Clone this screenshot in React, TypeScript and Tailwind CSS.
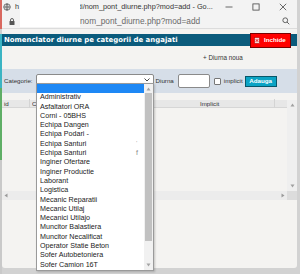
import React from "react";

const items: { t: string; r?: string }[] = [
  { t: "" },
  { t: "Administrativ" },
  { t: "Asfaltatori ORA" },
  { t: "Corni - 05BHS" },
  { t: "Echipa Dangen" },
  { t: "Echipa Podari -" },
  { t: "Echipa Santuri", r: "\u02c8" },
  { t: "Echipa Santuri", r: "f" },
  { t: "Inginer Ofertare" },
  { t: "Inginer Productie" },
  { t: "Laborant" },
  { t: "Logistica" },
  { t: "Mecanic Reparatii" },
  { t: "Mecanic Utilaj" },
  { t: "Mecanici Utilajo" },
  { t: "Muncitor Balastiera" },
  { t: "Muncitor Necalificat" },
  { t: "Operator Statie Beton" },
  { t: "Sofer Autobetoniera" },
  { t: "Sofer Camion 16T" },
];

function Globe() {
  return (
    <svg width="8" height="8" viewBox="0 0 16 16" fill="none" stroke="#555" strokeWidth="1.6">
      <circle cx="8" cy="8" r="6.5" />
      <path d="M1.5 8h13M8 1.5c-2.5 3-2.5 10 0 13M8 1.5c2.5 3 2.5 10 0 13" />
    </svg>
  );
}

function Lock() {
  return (
    <svg width="6" height="7" viewBox="0 0 12 14" fill="#555">
      <rect x="1" y="6" width="10" height="8" rx="1" />
      <path d="M3 6V4a3 3 0 0 1 6 0v2" fill="none" stroke="#555" strokeWidth="1.8" />
    </svg>
  );
}

function Search() {
  return (
    <svg width="8" height="8" viewBox="0 0 16 16" fill="none" stroke="#555" strokeWidth="1.8">
      <circle cx="6.5" cy="6.5" r="4.8" />
      <path d="M10 10l4.5 4.5" />
    </svg>
  );
}

export default function App() {
  return (
    <div className="relative w-[300px] h-[274px] overflow-hidden bg-[#d2d2d2] flex font-['Liberation_Sans',Arial,sans-serif]">
      {/* background strip at the very left */}
      <div className="w-[2px] flex flex-col">
        <div className="h-[29px] bg-[#d9685f]" />
        <div className="h-[5px] bg-[#cfcfcf]" />
        <div className="h-[54px] bg-[#3bb4c3]" />
        <div className="h-[72px] bg-[#5fae66]" />
        <div className="flex-1 bg-[#c9c9c9]" />
      </div>

      {/* browser popup window */}
      <div className="relative w-[295px] h-[268px] bg-[#f4f3f1] rounded-b-[3px] flex flex-col">
        {/* title bar */}
        <div className="h-[14px] bg-[#f3f3f3] flex items-center text-[7.3px] text-[#333] whitespace-nowrap">
          <div className="ml-[1px] w-[8px] flex justify-center">
            <Globe />
          </div>
          <span className="ml-[4px]">h</span>
          <span className="ml-[60px]">ti/nom_pont_diurne.php?mod=add - Go...</span>
          <div className="ml-auto flex items-center gap-[19px] pr-[10px]">
            <svg width="8" height="8" viewBox="0 0 8 8">
              <path d="M0.5 4h7" stroke="#444" strokeWidth="0.8" />
            </svg>
            <svg width="8" height="8" viewBox="0 0 8 8">
              <rect x="0.9" y="0.9" width="6.2" height="6.2" fill="none" stroke="#444" strokeWidth="0.8" />
            </svg>
            <svg width="8" height="8" viewBox="0 0 8 8">
              <path d="M0.8 0.8l6.4 6.4M7.2 0.8L0.8 7.2" stroke="#444" strokeWidth="0.8" />
            </svg>
          </div>
        </div>

        {/* address bar */}
        <div className="h-[15px] bg-[#f3f3f3] border-b border-[#dcdcdc] flex items-center text-[8.3px] text-[#6a6a6a] whitespace-nowrap">
          <div className="ml-[7px] w-[6px] flex justify-center">
            <Lock />
          </div>
          <span className="ml-[65px]">nom_pont_diurne.php?mod=add</span>
          <div className="ml-auto pr-[7px] flex">
            <Search />
          </div>
        </div>

        {/* redaction box */}
        <div className="absolute left-[18px] top-0 w-[60px] h-[27px] bg-white" />

        {/* page */}
        <div className="flex-1 flex flex-col">
          <div className="h-[5px]" />
          <div className="h-[12px] bg-[#0b5b7c] flex items-center justify-between pl-[2px] pr-[6px]">
            <span className="font-['DejaVu_Sans',sans-serif] font-bold text-[6.95px] text-white whitespace-nowrap">
              Nomenclator diurne pe categorii de angajati
            </span>
            <div className="h-[15px] w-[41px] bg-[#ff0000] border border-[#7a0000] flex items-center pl-[3px] gap-[4px]">
              <svg width="6" height="7" viewBox="0 0 6 7">
                <rect x="0.5" y="0.5" width="5" height="6" fill="#f6d6d6" stroke="#b00" strokeWidth="0.6" />
                <path d="M1.8 2.2l2.4 2.6M4.2 2.2L1.8 4.8" stroke="#d00" strokeWidth="0.8" />
              </svg>
              <span className="text-white font-bold text-[6.2px]">Inchide</span>
            </div>
          </div>

          <div className="h-[23px] flex items-center pl-[201px] text-[6.3px] text-[#333] whitespace-nowrap">
            + Diurna noua
          </div>

          {/* form bar */}
          <div className="h-[24px] bg-[#d6dee8] flex items-center pl-[2px] text-[6.2px] text-[#333] whitespace-nowrap">
            <span>Categorie:</span>
            <div className="ml-[3px] w-[118px] h-[12px] -mt-[2px] bg-white border border-[#8a8a8a] rounded-[2px] flex items-center justify-end pr-[3px]">
              <svg width="6" height="4" viewBox="0 0 6 4">
                <path d="M0.5 0.5L3 3l2.5-2.5" fill="none" stroke="#333" strokeWidth="0.9" />
              </svg>
            </div>
            <span className="ml-[2px]">Diurna</span>
            <div className="ml-[4px] w-[32px] h-[14px] bg-white border border-[#8a8a8a] rounded-[2px]" />
            <div className="ml-[4px] w-[7px] h-[7px] bg-white border border-[#777] rounded-[1px]" />
            <span className="ml-[3px]">implicit</span>
            <div className="ml-[2px] w-[32px] h-[11px] bg-[#0ba3c4] border border-[#07576a] flex items-center justify-center text-white font-bold">
              Adauga
            </div>
          </div>

          <div className="h-[7px]" />

          {/* table area */}
          <div className="flex-1 flex">
            <div className="flex-1 flex flex-col">
              <div className="h-[8px] bg-[#e7e7e7] border-b border-[#d6d6d6] flex items-center text-[6.2px] text-[#333] whitespace-nowrap">
                <div className="w-[28px] pl-[2px] border-r border-[#d4d4d4]">id</div>
                <div className="w-[170px] pl-[2px]">
                  <div className="w-[5px] overflow-hidden">C</div>
                </div>
                <div className="w-[75px] border-r border-[#d4d4d4]">Implicit</div>
                <div className="flex-1" />
              </div>
              <div className="h-[83px]" />
              <div className="h-[9px] bg-[#ececec] flex items-center justify-between px-[2px]">
                <svg width="4" height="5" viewBox="0 0 4 5">
                  <path d="M3.5 0.5v4L0.5 2.5z" fill="#9a9a9a" />
                </svg>
                <svg width="4" height="5" viewBox="0 0 4 5">
                  <path d="M0.5 0.5v4l3-2z" fill="#9a9a9a" />
                </svg>
              </div>
              <div className="flex-1" />
            </div>
            <div className="w-[10px] flex flex-col">
              <div className="h-[91px] bg-[#efefef] flex flex-col items-center justify-between py-[3px]">
                <svg width="5" height="4" viewBox="0 0 5 4">
                  <path d="M0.5 3.5h4l-2-3z" fill="#a0a0a0" />
                </svg>
                <svg width="5" height="4" viewBox="0 0 5 4">
                  <path d="M0.5 0.5h4l-2 3z" fill="#a0a0a0" />
                </svg>
              </div>
              <div className="h-[9px] bg-[#dcdcdc]" />
              <div className="flex-1" />
            </div>
          </div>
        </div>
      </div>

      {/* open select dropdown */}
      <div className="absolute left-[36px] top-[83px] w-[118px] h-[188px] bg-white border border-[#9a9a9a] shadow-[1px_1px_2px_rgba(0,0,0,0.2)] flex">
        <div className="flex-1 flex flex-col">
          {items.map((it, i) => (
            <div
              key={i}
              className={
                i === 0
                  ? "h-[9.3px] leading-[9.3px] bg-[#1e88f5] text-white text-[7.15px] pl-[3px] whitespace-nowrap"
                  : "h-[9.3px] leading-[9.3px] text-[#222] text-[7.15px] pl-[3px] pr-[6px] whitespace-nowrap flex justify-between"
              }
            >
              <span>{it.t}</span>
              {it.r ? <span className="text-[#8a8a8a]">{it.r}</span> : null}
            </div>
          ))}
        </div>
        <div className="w-[9px] bg-[#f1f1f1] flex flex-col items-center">
          <div className="h-[9px] flex items-center justify-center">
            <svg width="5" height="4" viewBox="0 0 5 4">
              <path d="M0.5 3.5h4l-2-3z" fill="#a3a3a3" />
            </svg>
          </div>
          <div className="w-[7px] h-[148px] bg-[#c1c1c1]" />
          <div className="flex-1 flex items-end pb-[3px]">
            <svg width="5" height="4" viewBox="0 0 5 4">
              <path d="M0.5 0.5h4l-2 3z" fill="#a3a3a3" />
            </svg>
          </div>
        </div>
      </div>
    </div>
  );
}
